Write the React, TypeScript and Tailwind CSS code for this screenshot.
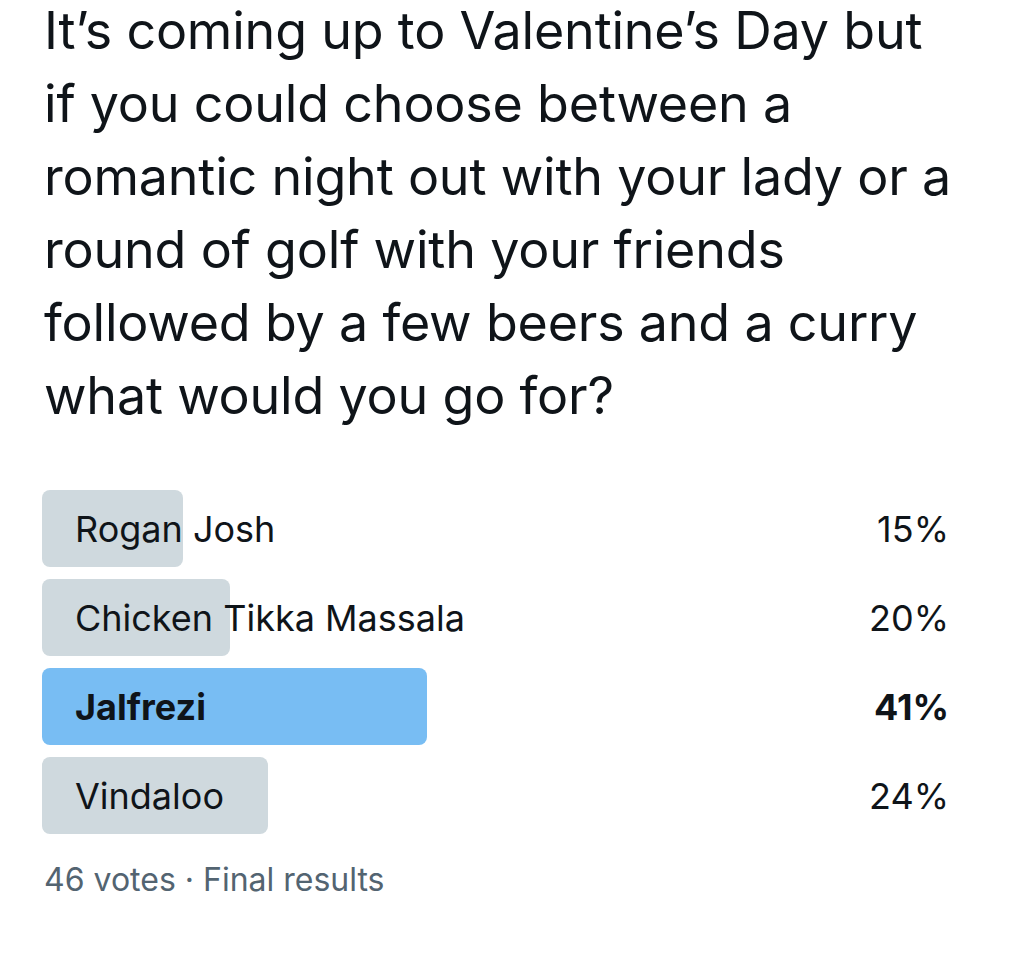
import React from "react";

const options = [
  { label: "Rogan Josh", pct: 15, win: false },
  { label: "Chicken Tikka Massala", pct: 20, win: false },
  { label: "Jalfrezi", pct: 41, win: true },
  { label: "Vindaloo", pct: 24, win: false },
];

export default function App() {
  return (
    <div
      className="w-[1024px] h-[956px] bg-white overflow-hidden pl-[42px] pr-[42px]"
      style={{ fontFamily: "Inter, 'Noto Sans', sans-serif" }}
    >
      <p className="text-[52px] leading-[73px] text-[#0f1419] tracking-[-0.2px] mt-[-6px] pl-[2px]">
        It’s coming up to Valentine’s Day but
        <br />
        if you could choose between a
        <br />
        romantic night out with your lady or a
        <br />
        round of golf with your friends
        <br />
        followed by a few beers and a curry
        <br />
        what would you go for?
      </p>
      <div className="mt-[58px] flex flex-col gap-[12px] w-[940px]">
        {options.map((o) => (
          <div key={o.label} className="relative h-[77px] flex items-center">
            <div
              className={`absolute left-0 top-0 h-full rounded-[8px] ${o.win ? "bg-[#78bdf3]" : "bg-[#cfd9de]"}`}
              style={{ width: `${o.pct}%` }}
            />
            <div
              className={`relative flex w-full justify-between px-[33px] text-[36px] text-[#0f1419] ${o.win ? "font-bold" : ""}`}
            >
              <span>{o.label}</span>
              <span>{o.pct}%</span>
            </div>
          </div>
        ))}
      </div>
      <div className="mt-[22px] pl-[2px] text-[32px] text-[#536471]">
        46 votes · Final results
      </div>
    </div>
  );
}
